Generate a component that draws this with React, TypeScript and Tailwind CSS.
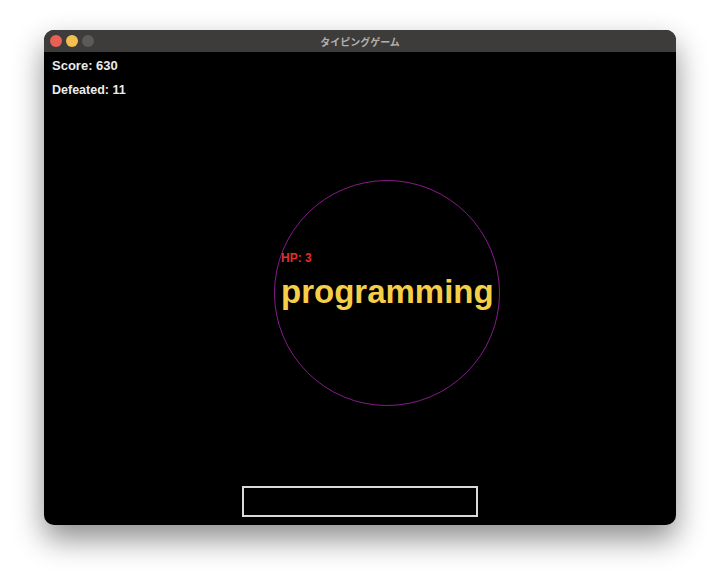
export default function App() {
  return (
    <div className="w-[720px] h-[584px] bg-white pt-[30px] pl-[44px]">
      <div className="w-[632px] h-[495px] rounded-[10px] overflow-hidden flex flex-col bg-black shadow-[0_14px_30px_rgba(0,0,0,0.45)] [font-family:'Liberation_Sans',Arial,sans-serif]">
        {/* title bar */}
        <div className="h-[22px] bg-[#3d3c3b] relative flex items-center justify-center shrink-0">
          <div className="absolute left-[6px] top-[5px] flex gap-[4px]">
            <span className="w-[12px] h-[12px] rounded-full bg-[#ec5f57]" />
            <span className="w-[12px] h-[12px] rounded-full bg-[#f5bf4f]" />
            <span className="w-[12px] h-[12px] rounded-full bg-[#5b5a59]" />
          </div>
          <span className="text-[10px] text-[#b2b1b0] [font-family:'Noto_Sans_CJK_JP',sans-serif] font-bold">
            タイピングゲーム
          </span>
        </div>

        {/* game canvas */}
        <div className="relative flex-1 flex flex-col">
          <div className="pl-[8px] pt-[6px] text-[#ebebeb] font-bold flex flex-col gap-[8px]">
            <span className="text-[13px] leading-[16px]">Score: 630</span>
            <span className="text-[12.5px] leading-[16px]">Defeated: 11</span>
          </div>

          {/* enemy */}
          <div className="absolute left-[230px] top-[128px] w-[226px] h-[226px] rounded-full border-[1.5px] border-[#861c8a]" />
          <div className="absolute left-[237px] top-[199px] flex flex-col items-start">
            <span className="text-[12px] leading-[14px] font-bold text-[#e0302b]">HP: 3</span>
            <span className="text-[33px] leading-[38px] font-bold text-[#f5cf47] mt-[8px]">programming</span>
          </div>

          <div className="mt-auto mb-[8px] mx-auto w-[236px] h-[31px] border-2 border-[#d9d9d9]" />
        </div>
      </div>
    </div>
  );
}
